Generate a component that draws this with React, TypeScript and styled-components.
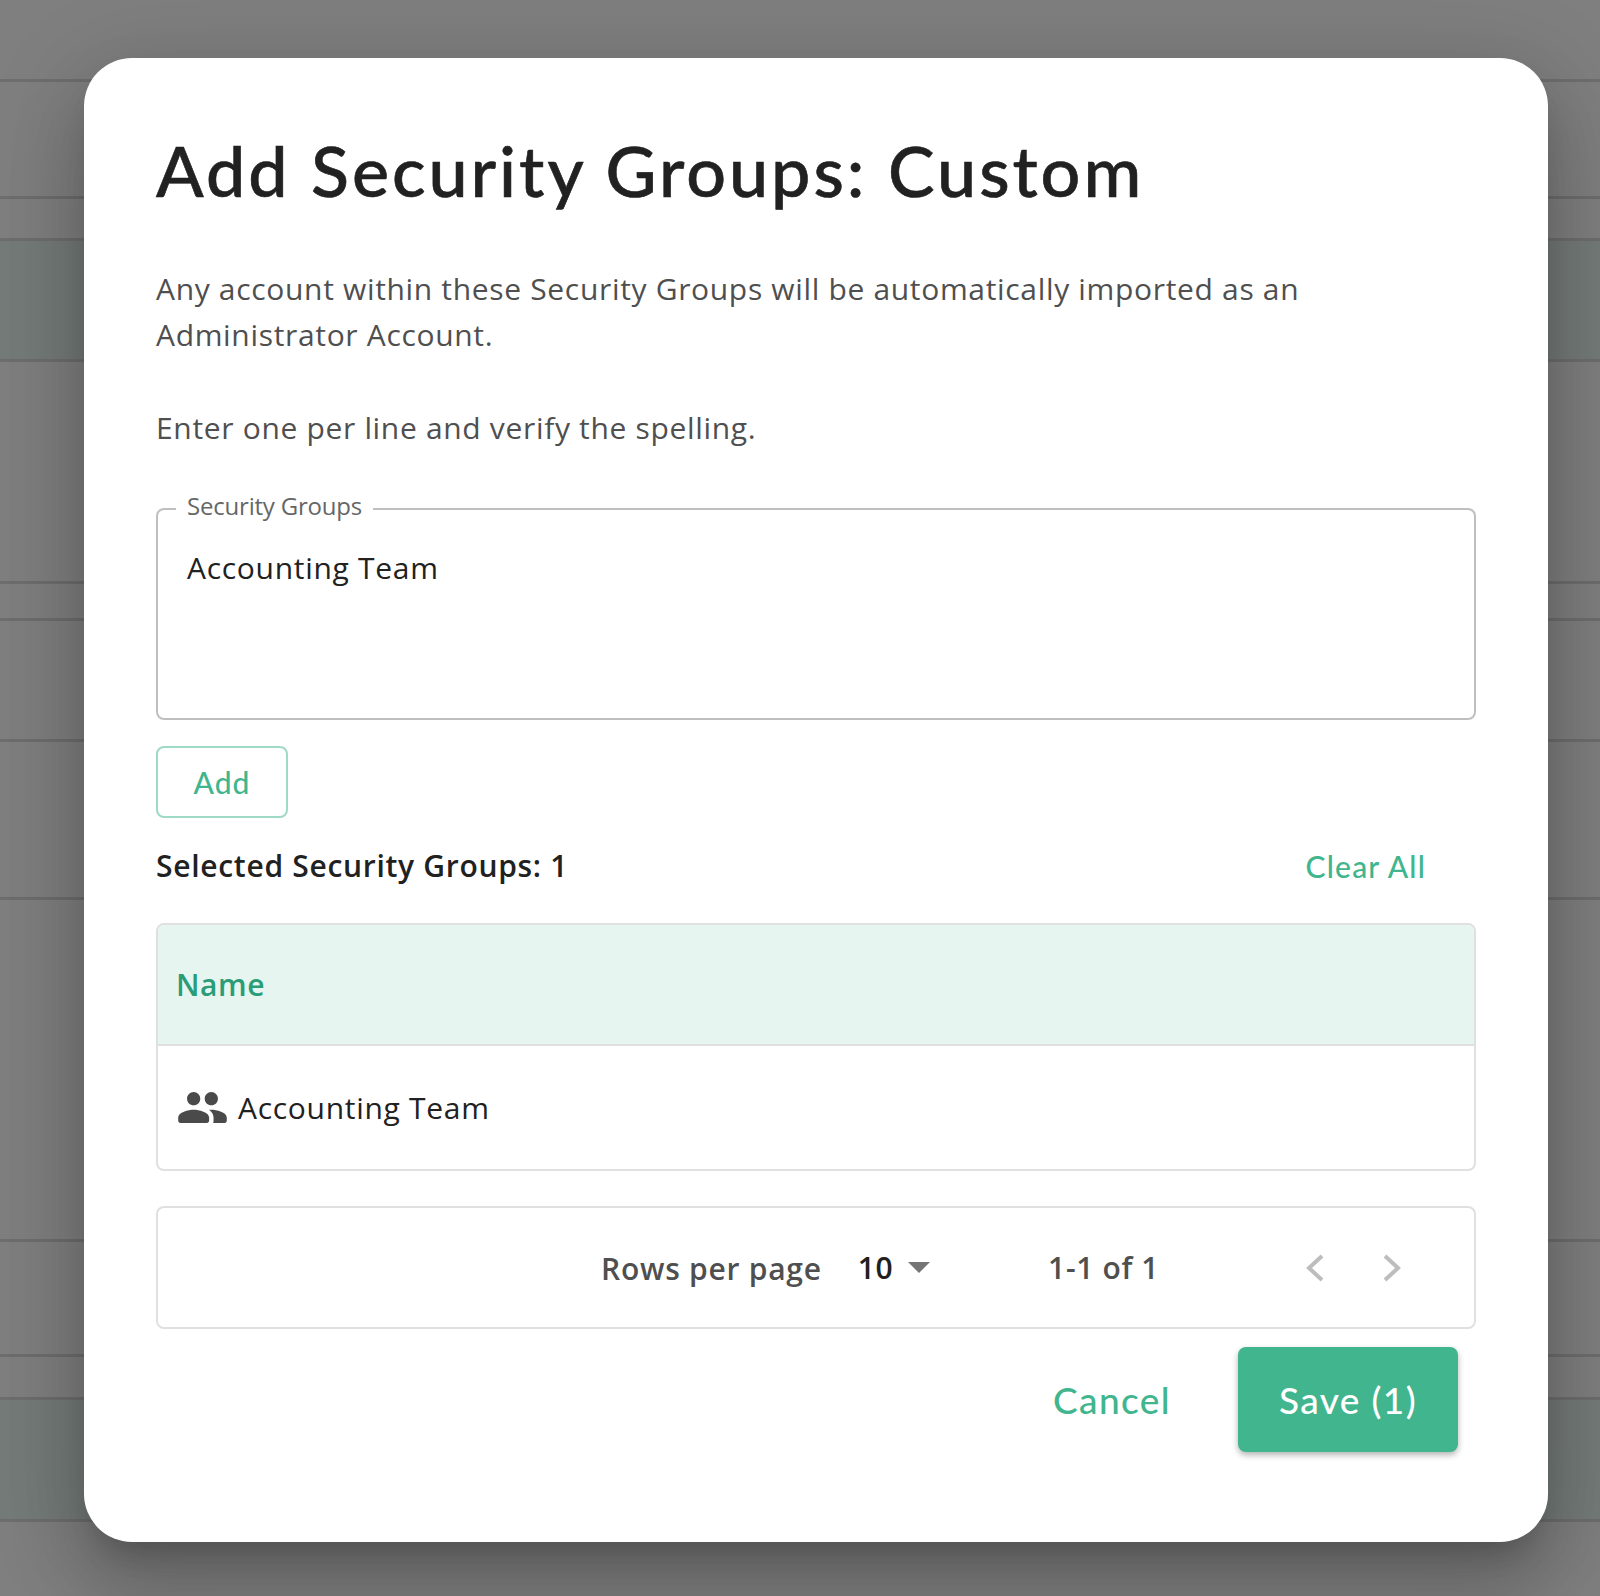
import React from "react";
import styled, { createGlobalStyle } from "styled-components";

const GlobalStyle = createGlobalStyle`
  html, body {
    margin: 0;
    padding: 0;
    background: #fff;
  }
  * {
    box-sizing: border-box;
  }
`;

const green = "#41b58d";
const bodyFont = `"Open Sans", "Noto Sans", sans-serif`;
const roundFont = `Lato, "Open Sans", sans-serif`;

const Page = styled.div`
  position: relative;
  width: 1600px;
  height: 1596px;
  overflow: hidden;
`;

const BackgroundRow = styled.div<{ $height: number; $selected?: boolean }>`
  height: ${({ $height }) => $height}px;
  border-bottom: 3px solid #dcdcdc;
  background: ${({ $selected }) => ($selected ? "#e9f6f1" : "#fff")};
`;

const Overlay = styled.div`
  position: absolute;
  inset: 0;
  background: rgba(0, 0, 0, 0.5);
`;

const Modal = styled.div`
  position: absolute;
  left: 84px;
  top: 58px;
  width: 1464px;
  height: 1484px;
  padding: 0 72px;
  background: #fff;
  border-radius: 48px;
  box-shadow: 0 22px 30px -14px rgba(0, 0, 0, 0.2),
    0 48px 76px 6px rgba(0, 0, 0, 0.14), 0 18px 92px 16px rgba(0, 0, 0, 0.12);
`;

const Title = styled.h1`
  margin: 0;
  padding-top: 67px;
  font: 500 70px/90px ${roundFont};
  letter-spacing: 2.95px;
  -webkit-text-stroke: 0.6px #212121;
  color: #212121;
  white-space: nowrap;
`;

const Description = styled.p`
  margin: 0;
  font: 400 30px/46px ${bodyFont};
  letter-spacing: 0.67px;
  color: #4f4f4f;
`;

const Intro = styled(Description)`
  margin-top: 51px;
`;

const Hint = styled(Description)`
  margin-top: 47px;
`;

const Field = styled.fieldset`
  margin: 41px 0 0;
  padding: 19px 29px 0;
  height: 228px;
  border: 2px solid #bfbfbf;
  border-radius: 8px;
`;

const FieldLabel = styled.legend`
  padding: 0 11px 6px;
  margin-left: -11px;
  font: 400 24px/28px ${bodyFont};
  letter-spacing: -0.2px;
  color: #666;
`;

const FieldValue = styled.div`
  font: 400 30px/46px ${bodyFont};
  letter-spacing: 0.7px;
  color: #212121;
`;

const AddButton = styled.button`
  display: block;
  margin-top: 26px;
  width: 132px;
  height: 72px;
  padding: 0;
  background: #fff;
  border: 2px solid #9fdac4;
  border-radius: 8px;
  font: 500 30px/1 ${roundFont};
  letter-spacing: 1px;
  color: ${green};
`;

const SelectedBar = styled.div`
  display: flex;
  justify-content: space-between;
  align-items: center;
  margin-top: 25px;
  height: 46px;
  padding-right: 50px;
`;

const SelectedCount = styled.div`
  font: 600 30px/46px ${bodyFont};
  letter-spacing: 0.7px;
  color: #212121;
`;

const ClearAll = styled.button`
  padding: 0;
  border: 0;
  background: none;
  font: 500 30px/46px ${roundFont};
  letter-spacing: 1.2px;
  color: ${green};
`;

const TableWrapper = styled.div`
  margin-top: 34px;
  border: 2px solid #e0e0e0;
  border-radius: 8px;
  overflow: hidden;
`;

const Table = styled.table`
  width: 100%;
  border-collapse: collapse;
  text-align: left;
`;

const HeadCell = styled.th`
  height: 120px;
  padding: 0 18px;
  background: #e6f5f0;
  border-bottom: 2px solid #e0e0e0;
  font: 600 30px/1 ${bodyFont};
  letter-spacing: 0.6px;
  color: #2a9d78;
`;

const BodyCell = styled.td`
  height: 124px;
  padding: 0 18px;
`;

const GroupName = styled.div`
  display: flex;
  align-items: center;
  gap: 9px;
  font: 400 30px/46px ${bodyFont};
  letter-spacing: 0.7px;
  color: #212121;
`;

const Pagination = styled.div`
  display: flex;
  align-items: center;
  height: 123px;
  margin-top: 35px;
  padding-left: 443px;
  border: 2px solid #e0e0e0;
  border-radius: 8px;
`;

const RowsLabel = styled.span`
  font: 600 30px/1 ${bodyFont};
  letter-spacing: 0.75px;
  color: #4f4f4f;
  position: relative;
  top: 1px;
`;

const RowsSelect = styled.span`
  display: flex;
  align-items: center;
  margin-left: 36px;
  font: 600 30px/1 ${bodyFont};
  letter-spacing: 0.5px;
  color: #212121;
`;

const Caret = styled.span`
  width: 0;
  height: 0;
  margin-left: 15px;
  border-left: 11.5px solid transparent;
  border-right: 11.5px solid transparent;
  border-top: 11.5px solid #757575;
`;

const PageRange = styled.span`
  margin-left: 118px;
  font: 600 30px/1 ${bodyFont};
  letter-spacing: 0.65px;
  color: #4f4f4f;
`;

const Arrows = styled.span`
  display: flex;
  gap: 57px;
  margin-left: 146px;
`;

const Footer = styled.div`
  display: flex;
  justify-content: flex-end;
  align-items: center;
  gap: 67px;
  margin-top: 18px;
  padding-right: 18px;
`;

const CancelButton = styled.button`
  padding: 0;
  border: 0;
  background: none;
  font: 500 37px/1 ${roundFont};
  letter-spacing: 1.4px;
  color: ${green};
`;

const SaveButton = styled.button`
  width: 220px;
  height: 105px;
  padding: 0;
  border: 0;
  border-radius: 8px;
  background: ${green};
  box-shadow: 0 3px 6px rgba(0, 0, 0, 0.3);
  font: 500 37px/1 ${roundFont};
  letter-spacing: 1.4px;
  color: #fff;
`;

const PeopleIcon = () => (
  <svg width="53" height="53" viewBox="0 0 24 24" fill="#4a4a4a">
    <path d="M16 11c1.66 0 2.99-1.34 2.99-3S17.66 5 16 5s-3 1.34-3 3 1.34 3 3 3zm-8 0c1.66 0 2.99-1.34 2.99-3S9.66 5 8 5 5 6.34 5 8s1.34 3 3 3zm0 2c-2.33 0-7 1.17-7 3.5V18c0 .55.45 1 1 1h12c.55 0 1-.45 1-1v-1.5c0-2.33-4.67-3.5-7-3.5zm8 0c-.29 0-.62.02-.97.05.02.01.03.03.04.04 1.14.83 1.93 1.94 1.93 3.41V18c0 .35-.07.69-.18 1H22c.55 0 1-.45 1-1v-1.5c0-2.33-4.67-3.5-7-3.5z" />
  </svg>
);

const Chevron = ({ flip }: { flip?: boolean }) => (
  <svg width="20" height="28" viewBox="0 0 20 28" fill="none">
    <path
      d={flip ? "M3 2l13 12L3 26" : "M17 2L4 14l13 12"}
      stroke="#bdbdbd"
      strokeWidth="4"
    />
  </svg>
);

const backgroundRows = [
  { height: 82 },
  { height: 117 },
  { height: 42 },
  { height: 121, selected: true },
  { height: 222 },
  { height: 37 },
  { height: 121 },
  { height: 158 },
  { height: 342 },
  { height: 115 },
  { height: 43 },
  { height: 122, selected: true },
];

export default function App() {
  return (
    <Page>
      <GlobalStyle />
      {backgroundRows.map((row, i) => (
        <BackgroundRow key={i} $height={row.height} $selected={row.selected} />
      ))}
      <Overlay />
      <Modal>
        <Title>Add Security Groups: Custom</Title>
        <Intro>
          Any account within these Security Groups will be automatically
          imported as an Administrator Account.
        </Intro>
        <Hint>Enter one per line and verify the spelling.</Hint>
        <Field>
          <FieldLabel>Security Groups</FieldLabel>
          <FieldValue>Accounting Team</FieldValue>
        </Field>
        <AddButton>Add</AddButton>
        <SelectedBar>
          <SelectedCount>Selected Security Groups: 1</SelectedCount>
          <ClearAll>Clear All</ClearAll>
        </SelectedBar>
        <TableWrapper>
          <Table>
            <thead>
              <tr>
                <HeadCell>Name</HeadCell>
              </tr>
            </thead>
            <tbody>
              <tr>
                <BodyCell>
                  <GroupName>
                    <PeopleIcon />
                    Accounting Team
                  </GroupName>
                </BodyCell>
              </tr>
            </tbody>
          </Table>
        </TableWrapper>
        <Pagination>
          <RowsLabel>Rows per page</RowsLabel>
          <RowsSelect>
            10
            <Caret />
          </RowsSelect>
          <PageRange>1-1 of 1</PageRange>
          <Arrows>
            <Chevron />
            <Chevron flip />
          </Arrows>
        </Pagination>
        <Footer>
          <CancelButton>Cancel</CancelButton>
          <SaveButton>Save (1)</SaveButton>
        </Footer>
      </Modal>
    </Page>
  );
}
